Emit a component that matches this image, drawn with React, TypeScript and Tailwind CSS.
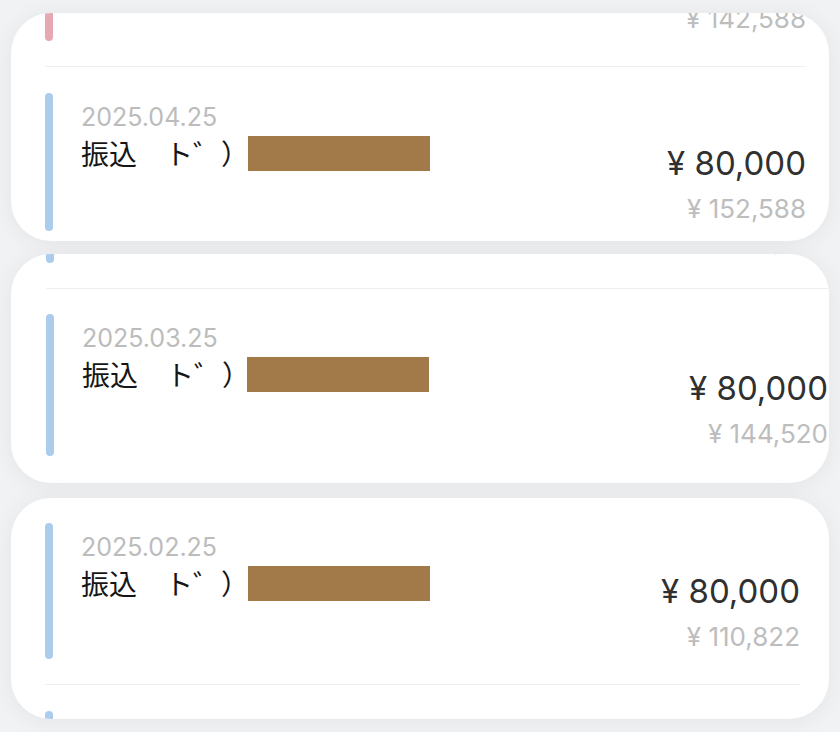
import React from 'react'

type Tx = {
  date: string
  amount: string
  balance: string
  bar: string
}

type RowProps = {
  tx: Tx
  barH: string
  pad: string
  nameShift: string
}

function Row({ tx, barH, pad, nameShift }: RowProps) {
  return (
    <div className={`flex ${pad}`}>
      <div className={`w-2 shrink-0 rounded-full ${tx.bar} ${barH}`} />
      <div className="flex flex-1 justify-between pl-[28px]">
        <div className="pt-[9px]">
          <div className="text-[25px] leading-[30px] text-[#bcbcbc]">{tx.date}</div>
          <div className="mt-[4px] flex h-[35px] items-center">
            <span className="whitespace-pre font-['Noto_Sans_CJK_JP',sans-serif] text-[28px] leading-[35px] text-[#161616]">
              振込　ト゛）
            </span>
            <span className={`h-[35px] w-[182px] bg-[#a27949] ${nameShift}`} />
          </div>
        </div>
        <div className="flex flex-col items-end justify-end pb-[7px]">
          <div className="text-[33px] leading-[40px] text-[#303030]">{tx.amount}</div>
          <div className="mt-[11px] text-[26px] leading-[30px] text-[#bdbdbd]">{tx.balance}</div>
        </div>
      </div>
    </div>
  )
}

// one cropped window of the statement list
function Card({
  rows,
  height,
  shift,
  px,
  barH,
  pad,
  nameShift,
}: {
  rows: Tx[]
  height: string
  shift: string
  px: string
  barH: string
  pad: string
  nameShift: string
}) {
  return (
    <div
      className={`mx-[11px] overflow-hidden rounded-[40px] bg-white shadow-[0_2px_24px_rgba(0,0,0,0.06)] ${height}`}
    >
      <div className={`flex flex-col ${shift} ${px}`}>
        {rows.map((tx, i) => (
          <React.Fragment key={i}>
            {i > 0 && <div className="h-px bg-[#efefef]" />}
            <Row tx={tx} barH={barH} pad={pad} nameShift={nameShift} />
          </React.Fragment>
        ))}
      </div>
    </div>
  )
}

const pink = 'bg-[#e7a9b1]'
const blue = 'bg-[#acccee]'

export default function App() {
  return (
    <div className="h-[732px] w-[840px] overflow-hidden bg-[#f0f2f4] pt-[13px] font-['Inter','Noto_Sans_CJK_JP',sans-serif]">
      <div className="flex flex-col">
        <Card
          height="h-[228px]"
          shift="-mt-[136px]"
          px="pl-[34px] pr-[23px]"
          barH="h-[138px]"
          pad="pt-[26px] pb-[25px]"
          nameShift="-ml-px"
          rows={[
            { date: '2025.04.30', amount: '¥ 10,000', balance: '¥ 142,588', bar: pink },
            { date: '2025.04.25', amount: '¥ 80,000', balance: '¥ 152,588', bar: blue },
          ]}
        />
        <div className="h-[13px]" />
        <Card
          height="h-[229px]"
          shift="-mt-[158px]"
          px="pl-[35px] pr-px"
          barH="h-[142px]"
          pad="pt-[25px] pb-[25px]"
          nameShift="-ml-[3px]"
          rows={[
            { date: '2025.03.31', amount: '¥ 15,932', balance: '¥ 64,520', bar: blue },
            { date: '2025.03.25', amount: '¥ 80,000', balance: '¥ 144,520', bar: blue },
          ]}
        />
        <div className="h-[15px]" />
        <Card
          height="h-[221px]"
          shift="-mt-px"
          px="pl-[34px] pr-[29px]"
          barH="h-[136px]"
          pad="pt-[26px] pb-[25px]"
          nameShift="-ml-px"
          rows={[
            { date: '2025.02.25', amount: '¥ 80,000', balance: '¥ 110,822', bar: blue },
            { date: '2025.01.25', amount: '¥ 80,000', balance: '¥ 30,822', bar: blue },
          ]}
        />
      </div>
    </div>
  )
}
